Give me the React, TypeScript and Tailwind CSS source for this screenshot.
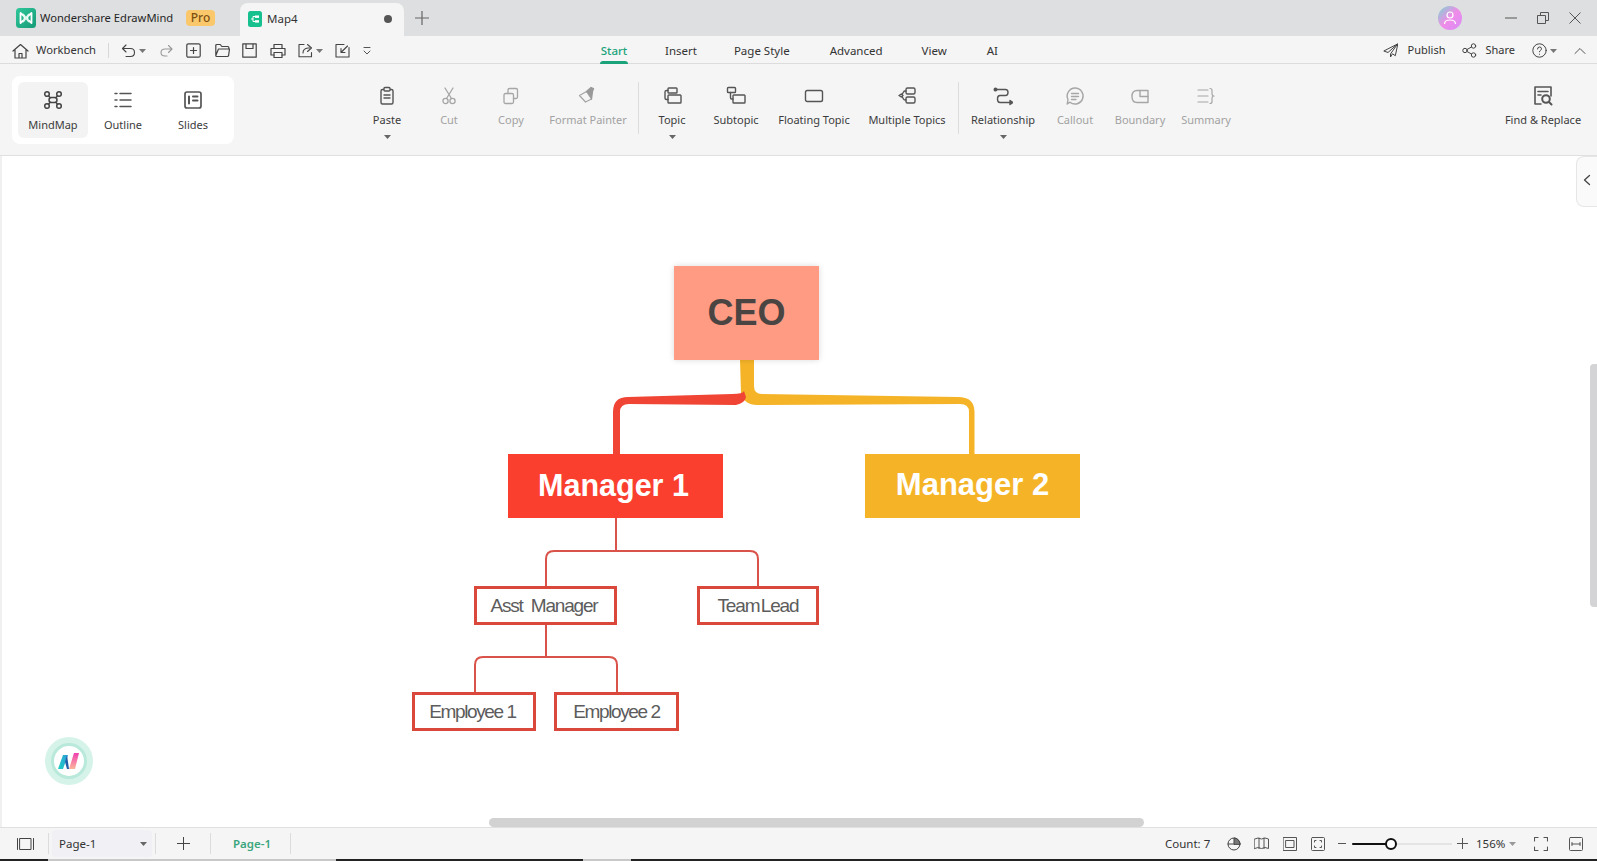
import React from "react";

const Ico = ({ s = 20, w, h, c = "#555", sw = 1.5, children }: { s?: number; w?: number; h?: number; c?: string; sw?: number; children: React.ReactNode }) => (
  <svg width={w ?? s} height={h ?? s} viewBox={`0 0 ${w ?? s} ${h ?? s}`} fill="none" stroke={c} strokeWidth={sw} strokeLinecap="round" strokeLinejoin="round" className="shrink-0 block">
    {children}
  </svg>
);

const Caret = ({ c = "#666" }: { c?: string }) => (
  <svg width="7" height="4" viewBox="0 0 7 4" className="shrink-0 block"><path d="M0 0H7L3.5 4Z" fill={c} /></svg>
);

const D = "#a6a6a6";

const PasteI = () => <Ico sw={1.4}><rect x="4" y="3.5" width="12" height="14.5" rx="1.5" /><rect x="7" y="1.5" width="6" height="3.5" rx="1" fill="#f5f5f5" /><path d="M7 9h6M7 12h6" /></Ico>;
const CutI = () => <Ico c={D} sw={1.3}><circle cx="6.5" cy="15" r="2.6" /><circle cx="13.5" cy="15" r="2.6" /><path d="M7.5 12.5 14 2M12.5 12.5 6 2" /></Ico>;
const CopyI = () => <Ico c={D} sw={1.3}><rect x="3" y="7.5" width="9.5" height="10" rx="1.5" /><path d="M7 7.5V4a1.5 1.5 0 0 1 1.5-1.5H15A1.5 1.5 0 0 1 16.5 4v7a1.5 1.5 0 0 1-1.5 1.5h-2.5" /></Ico>;
const BrushI = () => <Ico c={D} sw={1.3}><path d="M1.5 9.5 8.5 5.5 13.5 13 7.5 16Z" fill="#f5f5f5" /><path d="M8.5 5.5 13 1.5l2.5 1.2-1 2.6-1 7.7" fill="#999" stroke="#999" /></Ico>;
const TopicI = () => <Ico sw={1.4}><rect x="6" y="2" width="9" height="5" rx="0.8" /><rect x="6" y="9" width="13" height="8" rx="0.8" /><path d="M6 4.5H4.5Q3 4.5 3 6v6q0 1.5 1.5 1.5H6" /></Ico>;
const SubtopicI = () => <Ico sw={1.4}><rect x="1.5" y="1.5" width="8" height="5" rx="0.8" /><rect x="7" y="9" width="12" height="8" rx="0.8" /><path d="M4.5 6.5V11.5q0 1.5 1 1.5H7" /></Ico>;
const FloatI = () => <Ico sw={1.4}><rect x="1.5" y="4.5" width="17" height="11" rx="1.8" /></Ico>;
const MultiI = () => <Ico sw={1.4}><rect x="9" y="2" width="9" height="6" rx="1.5" /><rect x="9" y="11" width="9" height="6" rx="1.5" /><path d="M9 5H8Q7 5 6.5 6L5 8.5M9 14H8Q7 14 6.5 13L5 10.5" /><path d="M2 9.5 4.3 8 6 9.5 4.3 11Z" /></Ico>;
const RelI = () => <Ico sw={1.4}><circle cx="2.5" cy="3.5" r="1.3" fill="#555" /><path d="M3 3.5h9.5Q15 3.5 15 6.5T12.5 9.5H7Q4.5 9.5 4.5 13T7 16.5h11" /><path d="M17 14.5l3 2-3 2Z" fill="#555" /></Ico>;
const CalloutI = () => <Ico c={D} sw={1.4}><path d="M10 2a8 8 0 1 1-5 14.2L2.2 18l.8-4.5A8 8 0 0 1 10 2Z" /><path d="M6.5 7.5h7M6.5 10.5h7M6.5 13.5h4.5" /></Ico>;
const BoundI = () => <Ico c={D} sw={1.4}><path d="M7 4.5h11v12H7Q2 16.500 2 10.500T7 4.500Z" /><path d="M10 4.500V10.500h8" /></Ico>;
const SummaryI = () => <Ico c={D} sw={1.2}><path d="M2 4h10M2 10h10M2 16h10" /><path d="M14 2.500q2 0 2 2v3q0 2.500 2 2.500-2 0-2 2.500v3q0 2-2 2" /></Ico>;
const FindI = () => (
  <Ico s={22} sw={1.6}>
    <path d="M9 19H3V2h16v9" /><path d="M6 6.500h10M6 10h3" />
    <circle cx="14" cy="14" r="3.800" strokeWidth={2} /><path d="M17 17l2.500 2.500" strokeWidth={2} />
  </Ico>
);

const Item = ({ w, label, icon, dis, caret }: { w: string; label: string; icon: React.ReactNode; dis?: boolean; caret?: boolean }) => (
  <div className={`${w} h-full shrink-0 flex flex-col items-center`}>
    <div className="h-[22px] mt-[21px] flex items-center justify-center">{icon}</div>
    <div className={`mt-[5px] text-[11px] leading-[16px] whitespace-nowrap ${dis ? "text-[#a2a2a2]" : "text-[#3c3c3c]"}`}>{label}</div>
    {caret ? <div className="mt-[7px]"><Caret /></div> : null}
  </div>
);

const Mode = ({ label, icon, active }: { label: string; icon: React.ReactNode; active?: boolean }) => (
  <div className={`w-[70px] h-[56px] rounded-md flex flex-col items-center pt-[8px] ${active ? "bg-[#f3f3f3]" : ""}`}>
    <div className="h-[20px] flex items-center">{icon}</div>
    <div className="mt-[7px] text-[11px] leading-[16px] text-[#3c3c3c]">{label}</div>
  </div>
);

const Node = ({ className, children }: { className: string; children: React.ReactNode }) => (
  <div className={`absolute flex items-center justify-center whitespace-nowrap font-['Liberation_Sans',Arial,sans-serif] ${className}`}>{children}</div>
);

export default function App() {
  return (
    <div className="w-[1597px] h-[861px] overflow-hidden flex flex-col bg-white text-[#333] font-['Noto_Sans',sans-serif]">
      {/* title bar */}
      <div className="h-[36px] shrink-0 bg-[#dedfe0] flex items-center">
        <svg width="20" height="20" viewBox="0 0 20 20" className="ml-[16px] shrink-0">
          <defs><linearGradient id="lg" x1="0" y1="0" x2="1" y2="1"><stop offset="0" stopColor="#2fc79a" /><stop offset="1" stopColor="#159a77" /></linearGradient></defs>
          <rect width="20" height="20" rx="3.500" fill="url(#lg)" />
          <path d="M4.500 5 4.500 15 8.500 11.500 8.500 8.500ZM15.500 5 15.500 15 11.500 11.500 11.500 8.500Z" fill="none" stroke="#fff" strokeWidth="1.800" strokeLinejoin="round" />
          <path d="M7 6 10 10 13 6M7 14 10 10 13 14" fill="none" stroke="#dff7ee" strokeWidth="1.600" />
        </svg>
        <span className="ml-[4px] w-[134px] text-[11.200px] whitespace-nowrap text-[#262626]">Wondershare EdrawMind</span>
        <span className="ml-[12px] w-[29px] h-[16px] rounded-[4px] bg-[#fac76b] text-[#7d5010] text-[12px] leading-[16px] text-center font-medium">Pro</span>
        <div className="ml-[25px] w-[164px] h-[33px] self-end bg-[#f5f5f5] rounded-t-lg flex items-center pl-[8px] pb-[2px]">
          <svg width="14" height="16" viewBox="0 0 14 16" className="shrink-0">
            <rect width="14" height="16" rx="2.500" fill="#17c08f" />
            <path d="M3 8h2M5 8V5.500h2M5 8v2.500h2" fill="none" stroke="#fff" strokeWidth="1" />
            <rect x="7" y="4.500" width="4" height="2.400" fill="#fff" /><rect x="7" y="9.200" width="4" height="2.400" fill="#fff" />
          </svg>
          <span className="ml-[5px] w-[32px] text-[11.500px]">Map4</span>
          <span className="ml-[85px] w-[8px] h-[8px] rounded-full bg-[#555]" />
        </div>
        <svg width="14" height="14" viewBox="0 0 14 14" className="ml-[11px] shrink-0"><path d="M7 0v14M0 7h14" stroke="#666" strokeWidth="1.200" /></svg>
        <svg width="24" height="24" viewBox="0 0 24 24" className="ml-auto shrink-0">
          <defs><linearGradient id="av" x1="0" y1="0" x2="1" y2="1"><stop offset="0" stopColor="#78d8d0" /><stop offset="0.5" stopColor="#f08ce8" /><stop offset="1" stopColor="#d78cf8" /></linearGradient></defs>
          <circle cx="12" cy="12" r="12" fill="url(#av)" />
          <circle cx="12" cy="9" r="3" fill="none" stroke="#fff" strokeWidth="1.200" />
          <path d="M6.500 18q0-4 5.500-4t5.500 4" fill="none" stroke="#fff" strokeWidth="1.200" />
        </svg>
        <svg width="12" height="2" viewBox="0 0 12 2" className="ml-[43px] shrink-0"><path d="M0 1h12" stroke="#555" /></svg>
        <svg width="12" height="12" viewBox="0 0 12 12" className="ml-[20px] shrink-0"><path d="M.5 3.500h8v8h-8zM3.500 3.500v-3h8v8h-3" fill="none" stroke="#555" /></svg>
        <svg width="12" height="12" viewBox="0 0 12 12" className="ml-[20px] mr-[16px] shrink-0"><path d="M.5.5l11 11M11.500.5l-11 11" stroke="#555" /></svg>
      </div>

      {/* quick access + tabs */}
      <div className="h-[28px] shrink-0 bg-[#f5f5f5] border-b border-[#dcdcdc] flex items-center text-[11.500px] pt-[2px]">
        <span className="ml-[12px]"><Ico s={16} w={17} c="#444" sw={1.200}><path d="M1 8 8.500 1.500 16 8M3 6.500V15h11V6.500M7 15v-4.500h3V15" /></Ico></span>
        <span className="ml-[7px] w-[60px] text-[11.200px] whitespace-nowrap text-[#333]">Workbench</span>
        <span className="ml-[12px] w-px h-[15px] bg-[#d8d8d8]" />
        <span className="ml-[12px]"><Ico s={15} c="#444" sw={1.100}><path d="M5 2 1.500 5.500 5 9M1.500 5.500h8Q13.500 5.500 13.500 9.500T9.500 13.500H5" /></Ico></span>
        <span className="ml-[3px]"><Caret c="#777" /></span>
        <span className="ml-[14px]"><Ico s={13} c="#999" sw={1.100}><path d="M8.500 1.500 12 5 8.500 8.500M12 5H5Q1 5 1 8.500T5 12h2" /></Ico></span>
        <span className="ml-[13px]"><Ico s={15} c="#444" sw={1.200}><rect x=".8" y=".8" width="13.400" height="13.400" rx="1.500" /><path d="M7.500 4.500v6M4.500 7.500h6" /></Ico></span>
        <span className="ml-[14px]"><Ico s={15} c="#444" sw={1.200}><path d="M.8 12.500V2.500q0-1 1-1h3.500l1.500 2h6q1 0 1 1V5M.8 12.500q0 1 1 1h10.500q1 0 1.300-1L14.500 6H3.500L.8 12.500Z" /></Ico></span>
        <span className="ml-[12px]"><Ico s={15} c="#444" sw={1.200}><path d="M.8.8H14.200V14.200H.8ZM4 .8V5.500H11V.8M4 14H11" /></Ico></span>
        <span className="ml-[13px]"><Ico s={16} c="#444" sw={1.200}><path d="M4 5V1.500H12V5M4 12H1V5.500H15V12H12" /><rect x="4" y="9.500" width="8" height="5" /></Ico></span>
        <span className="ml-[12px]"><Ico s={15} c="#444" sw={1.100}><path d="M13.500 9.500v4.200H1V1.500h5" /><path d="M5 10q0-4.500 5-5h1.500M9.500 1.500l4 3.500-4 3.500" /></Ico></span>
        <span className="ml-[3px]"><Caret c="#777" /></span>
        <span className="ml-[12px]"><Ico s={15} c="#444" sw={1.100}><path d="M14 4.500V14H1V1.500h8" /><path d="M12.500 3 6 9.500M6 5.500v4h4" /></Ico></span>
        <span className="ml-[12px]"><Ico s={10} c="#555" sw={1}><path d="M2 1.500h6M2 5l3 3 3-3" /></Ico></span>

        <div className="relative ml-[228px] w-[28px] text-center font-medium text-[#1aa37a] h-full leading-[25px] whitespace-nowrap">
          Start
          <span className="absolute left-0 right-0 bottom-[-1px] h-[3px] rounded-t-sm bg-[#1aa37a]" />
        </div>
        <span className="ml-[37px] whitespace-nowrap">Insert</span>
        <span className="ml-[37px] whitespace-nowrap">Page Style</span>
        <span className="ml-[40px] whitespace-nowrap">Advanced</span>
        <span className="ml-[39px] whitespace-nowrap">View</span>
        <span className="ml-[40px] whitespace-nowrap">AI</span>

        <div className="ml-auto flex items-center">
          <Ico s={15} c="#444" sw={1}><path d="M14.500 1 .8 8 5 9.500l9.500-8.500-7 10V14l2-3.200 2.500 1.700Z" /></Ico>
          <span className="ml-[9px] text-[11px] whitespace-nowrap">Publish</span>
          <span className="ml-[17px]"><Ico s={15} c="#444" sw={1}><circle cx="3" cy="7.500" r="2.200" /><circle cx="11.500" cy="3" r="2.200" /><circle cx="11.500" cy="12" r="2.200" /><path d="M5 6.500 9.500 4M5 8.500 9.500 11" /></Ico></span>
          <span className="ml-[8px] text-[11px] whitespace-nowrap">Share</span>
          <span className="ml-[17px]"><Ico s={15} c="#444" sw={1}><circle cx="7.500" cy="7.500" r="6.700" /><path d="M5.500 6q0-2 2-2t2 1.800q0 1-1 1.500t-1 1.500M7.500 11.200v.1" /></Ico></span>
          <span className="ml-[3px]"><Caret c="#777" /></span>
          <span className="ml-[17px] mr-[11px]"><Ico s={12} c="#555" sw={1}><path d="M1 8.500 6 3.500l5 5" /></Ico></span>
        </div>
      </div>

      {/* ribbon */}
      <div className="h-[92px] shrink-0 bg-[#f5f5f5] border-b border-[#e0e0e0] flex">
        <div className="ml-[12px] mt-[12px] w-[222px] h-[68px] shrink-0 rounded-lg bg-white p-[6px] flex">
          <Mode active label="MindMap" icon={<Ico s={20} c="#444" sw={1.500}><circle cx="4" cy="4" r="2.300" /><circle cx="16" cy="4" r="2.300" /><circle cx="4" cy="16" r="2.300" /><circle cx="16" cy="16" r="2.300" /><rect x="6" y="7.500" width="8" height="5" rx="2.500" /><path d="M5.500 5.800 7 7.500M14.500 5.800 13 7.500M5.500 14.200 7 12.500M14.500 14.200 13 12.500" /></Ico>} />
          <Mode label="Outline" icon={<Ico s={20} c="#555" sw={1.500}><path d="M2 3.500h2M7 3.500h11M2 10h2M7 10h11M2 16.500h2M7 16.500h11" /></Ico>} />
          <Mode label="Slides" icon={<Ico s={20} c="#555" sw={1.700}><rect x="2" y="2" width="16" height="16" rx="2" /><path d="M6 6.500v7M10 6.500h4.500M10 10.500h4.500" strokeWidth="2" /></Ico>} />
        </div>
        <div className="ml-[122px] flex h-full">
          <Item w="w-[62px]" label="Paste" icon={<PasteI />} caret />
          <Item w="w-[62px]" label="Cut" icon={<CutI />} dis />
          <Item w="w-[62px]" label="Copy" icon={<CopyI />} dis />
          <Item w="w-[92px]" label="Format Painter" icon={<BrushI />} dis />
          <span className="ml-[4px] mr-[3px] mt-[18px] w-px h-[52px] bg-[#dcdcdc]" />
          <Item w="w-[60px]" label="Topic" icon={<TopicI />} caret />
          <Item w="w-[68px]" label="Subtopic" icon={<SubtopicI />} />
          <Item w="w-[88px]" label="Floating Topic" icon={<FloatI />} />
          <Item w="w-[98px]" label="Multiple Topics" icon={<MultiI />} />
          <span className="ml-[2px] mr-[1px] mt-[18px] w-px h-[52px] bg-[#dcdcdc]" />
          <Item w="w-[86px]" label="Relationship" icon={<RelI />} caret />
          <Item w="w-[58px]" label="Callout" icon={<CalloutI />} dis />
          <Item w="w-[72px]" label="Boundary" icon={<BoundI />} dis />
          <Item w="w-[60px]" label="Summary" icon={<SummaryI />} dis />
        </div>
        <div className="ml-auto mr-[11px]">
          <Item w="w-[86px]" label="Find & Replace" icon={<FindI />} />
        </div>
      </div>

      {/* canvas */}
      <div className="relative flex-1 bg-white border-l-2 border-[#f0f0f0]">
        <svg width="1597" height="671" viewBox="2 156 1597 671" className="absolute left-0 top-0">
          <path d="M740 360H754V386Q754 394 762 394L958 397Q974.500 397 974.500 412V454H969V412Q969 404 960 404L757 405Q744 405 741 393Z" fill="#f5b428" />
          <path d="M744 391Q743 394 732 394L628 397Q613 397 613 412V454H620V412Q620 404 629 404L736 405Q745 403 746 397Z" fill="#f04434" />
          <g fill="none" stroke="#d9534a" strokeWidth="2">
            <path d="M616 518V551M546 586V559Q546 551 554 551H750Q758 551 758 559V586" />
            <path d="M546 625V657M475 692V665Q475 657 483 657H609Q617 657 617 665V692" />
          </g>
        </svg>
        <Node className="left-[672px] top-[110px] w-[145px] h-[94px] bg-[#ff9b82] shadow-[0_0_6px_rgba(0,0,0,0.15)] text-[#4a4442] text-[36px] font-bold pb-[1px]">CEO</Node>
        <Node className="left-[506px] top-[298px] w-[215px] h-[64px] bg-[#fb3f2f] text-white text-[30.500px] font-bold pb-[1px] pr-[4px]">Manager 1</Node>
        <Node className="left-[863px] top-[298px] w-[215px] h-[64px] bg-[#f5b428] text-white text-[31px] font-bold pb-[1px]">Manager 2</Node>
        <Node className="left-[472px] top-[430px] w-[143px] h-[39px] border-[3px] border-[#d9483b] bg-white text-[#5c5c5c] text-[19px] tracking-[-1.2px] pr-[3px] pt-[2px]">Asst&nbsp; Manager</Node>
        <Node className="left-[695px] top-[430px] w-[122px] h-[39px] border-[3px] border-[#d9483b] bg-white text-[#5c5c5c] text-[19px] tracking-[-1.1px] [word-spacing:-3px] pt-[2px]">Team Lead</Node>
        <Node className="left-[410px] top-[536px] w-[124px] h-[39px] border-[3px] border-[#d9483b] bg-white text-[#5c5c5c] text-[19px] tracking-[-1.4px] pr-[3px] pt-[2px]">Employee 1</Node>
        <Node className="left-[552px] top-[536px] w-[125px] h-[39px] border-[3px] border-[#d9483b] bg-white text-[#5c5c5c] text-[19px] tracking-[-1.4px] pt-[2px]">Employee 2</Node>

        {/* assistant bubble */}
        <div className="absolute left-[43px] top-[581px] w-[48px] h-[48px] rounded-full bg-[#d6f3ea] flex items-center justify-center">
          <div className="w-[36px] h-[36px] rounded-full bg-white border-[3px] border-[#b9e9da] flex items-center justify-center">
            <svg width="22" height="18" viewBox="0 0 22 18">
              <defs>
                <linearGradient id="n1" x1="0" y1="1" x2="1" y2="0"><stop offset="0" stopColor="#22d0c4" /><stop offset="1" stopColor="#2a9fd8" /></linearGradient>
                <linearGradient id="n2" x1="0" y1="0" x2="0" y2="1"><stop offset="0" stopColor="#f03fb0" /><stop offset="1" stopColor="#fbb79a" /></linearGradient>
              </defs>
              <path d="M0 17 5 3h5L5 17Z" fill="url(#n1)" />
              <path d="M7 10 9 3 11 17 9 17Z" fill="#245ea8" />
              <path d="M11 17 16 1h5L17 17Z" fill="url(#n2)" />
            </svg>
          </div>
        </div>

        {/* panel toggle */}
        <div className="absolute right-0 top-0 w-[21px] h-[51px] rounded-l-lg border border-r-0 border-[#e6e6e6] bg-[#fafafa] flex items-center justify-center pb-[3px]">
          <Ico s={12} c="#444" sw={1.300}><path d="M8.500 1.500 3.500 6l5 4.500" /></Ico>
        </div>

        {/* scrollbars */}
        <div className="absolute right-0 top-[208px] w-[7px] h-[243px] rounded-l bg-[#d4d4d6]" />
        <div className="absolute left-[487px] bottom-0 w-[655px] h-[9px] rounded-md bg-[#d2d2d2]" />
      </div>

      {/* status bar */}
      <div className="h-[32px] shrink-0 bg-[#f5f5f5] border-t border-[#e0e0e0] flex items-center text-[11.500px]">
        <span className="ml-[17px]"><Ico w={17} h={12} c="#444" sw={1}><path d="M.5.5v11M16.500.5v11" /><rect x="3" y=".5" width="11" height="11" /></Ico></span>
        <span className="ml-[14px] w-px h-[21px] bg-[#dcdcdc]" />
        <div className="ml-[3px] w-[100px] h-[27px] bg-[#f0f0f5] rounded flex items-center pl-[7px]">
          <span className="w-[81px]">Page-1</span>
          <Caret />
        </div>
        <span className="ml-[3px] w-px h-[21px] bg-[#dcdcdc]" />
        <span className="ml-[21px]"><Ico s={13} c="#444" sw={1}><path d="M6.500 0v13M0 6.500h13" /></Ico></span>
        <span className="ml-[20px] w-px h-[21px] bg-[#dcdcdc]" />
        <span className="ml-[22px] w-[38px] font-semibold text-[#3ba57d]">Page-1</span>
        <span className="ml-[19px] w-px h-[21px] bg-[#dcdcdc]" />
        <span className="ml-[874px] w-[46px] whitespace-nowrap">Count: 7</span>
        <span className="ml-[16px]"><Ico s={14} c="#444" sw={1}><circle cx="7" cy="7" r="6" /><path d="M7 7V1A6 6 0 0 1 13 7Z" fill="#777" /><path d="M7 7H1" /></Ico></span>
        <span className="ml-[13px]"><Ico w={15} h={13} c="#555" sw={1}><path d="M.5 2q3.500-2 7 0 3.500-2 7 0v9.500q-3.500-2-7 0-3.500-2-7 0ZM5 1v10.500M10 1v10.500" /></Ico></span>
        <span className="ml-[14px]"><Ico s={14} c="#555" sw={1}><rect x=".5" y=".5" width="13" height="13" /><rect x="3" y="3.500" width="8" height="7" /></Ico></span>
        <span className="ml-[14px]"><Ico s={14} c="#555" sw={1}><rect x=".5" y=".5" width="13" height="13" rx="1" /><path d="M3.500 5V3.500H5M10.500 5V3.500H9M3.500 9v1.500H5M10.500 9v1.500H9" /></Ico></span>
        <span className="ml-[13px] w-[8px] h-px bg-[#555]" />
        <div className="relative ml-[6px] w-[100px] h-[2px] bg-[#e4e4e4]">
          <div className="h-full w-[39px] bg-[#111] rounded" />
          <div className="absolute left-[33px] top-[-5px] w-[12px] h-[12px] rounded-full bg-white border-[2.500px] border-[#111]" />
        </div>
        <span className="ml-[5px]"><Ico s={11} c="#555" sw={1}><path d="M5.500 0v11M0 5.500h11" /></Ico></span>
        <span className="ml-[8px] w-[29px] whitespace-nowrap">156%</span>
        <span className="ml-[4px]"><Caret c="#999" /></span>
        <span className="ml-[18px]"><Ico s={14} c="#555" sw={1.100}><path d="M.5 4V.5H4M10 .5h3.500V4M.5 10v3.500H4M10 13.500h3.500V10" /></Ico></span>
        <span className="ml-[21px]"><Ico s={14} c="#555" sw={1}><rect x=".5" y=".5" width="13" height="13" rx="1" /><path d="M3 7h8M3 5.500V8.500M11 5.500V8.500" /></Ico></span>
      </div>

      {/* bottom edge */}
      <div className="h-[2px] shrink-0 flex bg-[#222]">
        <div className="ml-[48px] w-[288px] bg-[#c8c8c8]" />
        <div className="ml-[247px] w-[48px] bg-[#c8c8c8]" />
      </div>
    </div>
  );
}
